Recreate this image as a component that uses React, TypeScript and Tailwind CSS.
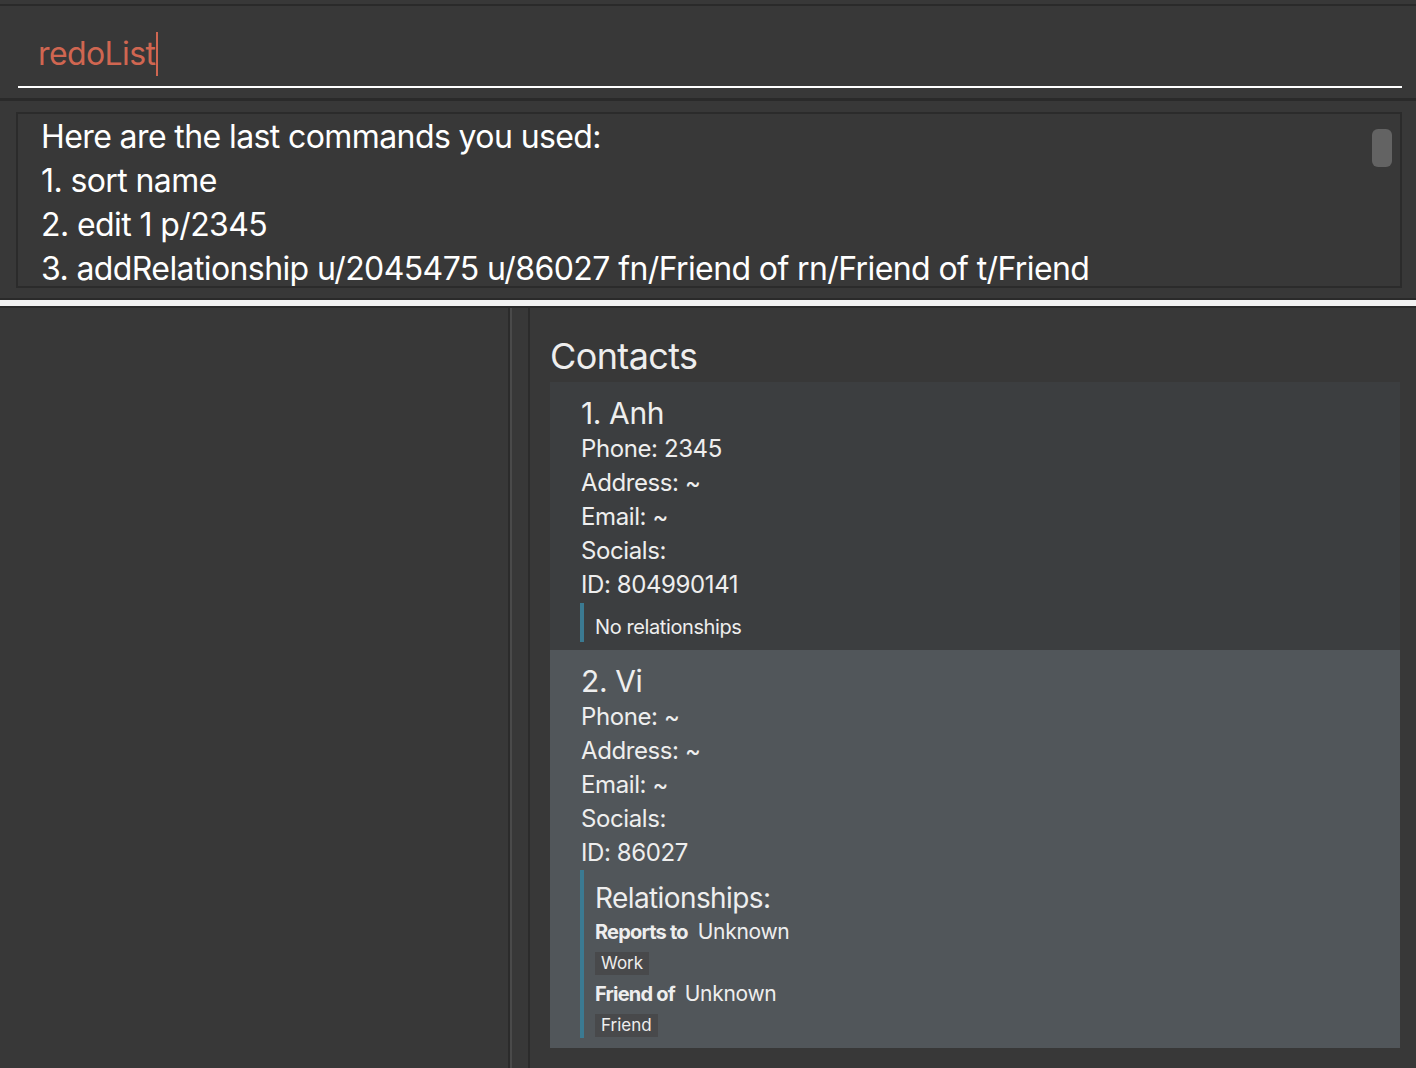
import React from 'react';

const results = [
  'Here are the last commands you used:',
  '1. sort name',
  '2. edit 1 p/2345',
  '3. addRelationship u/2045475 u/86027 fn/Friend of rn/Friend of t/Friend',
];

const Field = ({ children }: { children: React.ReactNode }) => (
  <div className="text-[24px] leading-[34px] text-[#eeeeee] tracking-[-0.4px]">{children}</div>
);

const Tag = ({ label }: { label: string }) => (
  <div className="flex">
    <span className="bg-[#48494b] text-[#eeeeee] text-[17px] leading-[23px] px-[6px]">{label}</span>
  </div>
);

const App = () => {
  return (
    <div
      className="w-[1416px] h-[1068px] bg-[#383838] flex flex-col overflow-hidden"
      style={{ fontFamily: 'Inter, "Noto Sans", sans-serif' }}
    >
      {/* top edge */}
      <div className="h-[4px] shrink-0" />
      <div className="h-[2px] bg-[#2a2a2a] shrink-0" />

      {/* Command box */}
      <div className="h-[92px] shrink-0 pl-[18px] pr-[14px] pt-[26px] flex flex-col">
        <div className="h-[56px] border-b-2 border-white flex items-start pl-[20px]">
          <span className="text-[32px] leading-[44px] text-[#d06651] tracking-[-0.6px]">redoList</span>
          <span className="w-[2px] h-[44px] bg-[#d06651] ml-[1px]" />
        </div>
      </div>
      <div className="h-[3px] bg-[#2a2a2a] shrink-0" />

      {/* Result display */}
      <div className="h-[197px] shrink-0 pt-[11px] pl-[16px] pr-[14px] pb-[10px]">
        <div className="relative h-full border-2 border-[#2b2b2b] overflow-hidden pl-[23px] pt-[1px]">
          {results.map((line) => (
            <div key={line} className="text-[32px] leading-[44px] text-white whitespace-nowrap tracking-[-0.6px]">
              {line}
            </div>
          ))}
          <div className="absolute right-[8px] top-[15px] w-[20px] h-[38px] rounded-[6px] bg-[#636363]" />
        </div>
      </div>

      {/* separator */}
      <div className="h-[2px] bg-[#2a2a2a] shrink-0" />
      <div className="h-[6px] bg-[#f2f2f2] shrink-0" />
      <div className="h-[2px] bg-[#2a2a2a] shrink-0" />

      {/* Bottom panes */}
      <div className="flex-1 flex min-h-0">
        <div className="w-[508px] shrink-0" />
        <div className="w-[2px] bg-[#2b2b2b] shrink-0" />
        <div className="w-[2px] bg-[#4a4a4a] shrink-0" />
        <div className="w-[16px] shrink-0" />
        <div className="w-[2px] bg-[#2b2b2b] shrink-0" />

        <div className="flex-1 pl-[20px] pr-[16px] flex flex-col min-w-0">
          <div className="h-[74px] shrink-0 flex items-end pb-[4px]">
            <span className="text-[36px] leading-[44px] text-[#eeeeee] tracking-[-0.6px]">Contacts</span>
          </div>

          {/* Card 1 */}
          <div className="bg-[#3c3e40] pl-[31px] pt-[13px] pb-[8px]">
            <div className="text-[30px] leading-[37px] text-[#eeeeee] tracking-[-0.4px]">1. Anh</div>
            <Field>Phone: 2345</Field>
            <Field>Address: ~</Field>
            <Field>Email: ~</Field>
            <Field>Socials:</Field>
            <Field>ID: 804990141</Field>
            <div className="mt-[1px] -ml-[1px] border-l-4 border-[#3b7a92] pl-[11px] pt-[12px] pb-[3px]">
              <div className="text-[20px] leading-[24px] text-[#eeeeee] tracking-[-0.4px]">No relationships</div>
            </div>
          </div>

          {/* Card 2 */}
          <div className="bg-[#51565a] pl-[31px] pt-[13px] pb-[10px]">
            <div className="text-[30px] leading-[37px] text-[#eeeeee] tracking-[-0.4px]">2. Vi</div>
            <Field>Phone: ~</Field>
            <Field>Address: ~</Field>
            <Field>Email: ~</Field>
            <Field>Socials:</Field>
            <Field>ID: 86027</Field>
            <div className="-ml-[1px] border-l-4 border-[#3b7a92] pl-[11px] pt-[11px] pb-[1px] flex flex-col">
              <div className="text-[28px] leading-[34px] text-[#eeeeee] tracking-[-0.6px]">Relationships:</div>
              <div className="mt-[2px] flex items-baseline gap-[10px] leading-[30px]">
                <span className="text-[20px] font-bold text-[#eeeeee] tracking-[-0.8px]">Reports to</span>
                <span className="text-[21px] text-[#eeeeee] tracking-[-0.3px]">Unknown</span>
              </div>
              <div className="mt-[5px]">
                <Tag label="Work" />
              </div>
              <div className="mt-[4px] flex items-baseline gap-[10px] leading-[30px]">
                <span className="text-[20px] font-bold text-[#eeeeee] tracking-[-0.8px]">Friend of</span>
                <span className="text-[21px] text-[#eeeeee] tracking-[-0.3px]">Unknown</span>
              </div>
              <div className="mt-[5px]">
                <Tag label="Friend" />
              </div>
            </div>
          </div>
        </div>
      </div>
    </div>
  );
};

export default App;
